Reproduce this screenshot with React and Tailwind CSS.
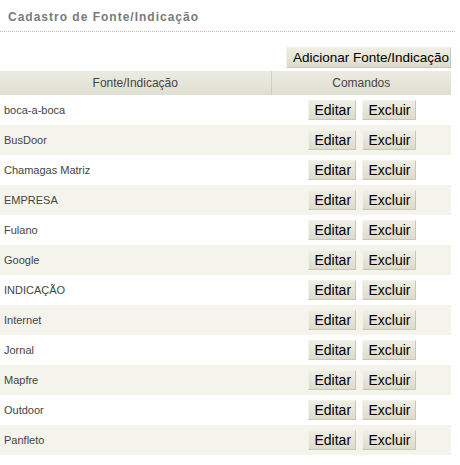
import React from 'react';

const fontes = [
  'boca-a-boca',
  'BusDoor',
  'Chamagas Matriz',
  'EMPRESA',
  'Fulano',
  'Google',
  'INDICAÇÃO',
  'Internet',
  'Jornal',
  'Mapfre',
  'Outdoor',
  'Panfleto',
];

function Botao({ children, className = '' }) {
  return (
    <button
      className={`h-[20px] px-[6px] leading-none whitespace-nowrap text-black bg-gradient-to-b from-[#eeeee4] to-[#dcdbcb] border border-[#f2f2ea] border-b-[#c9c8b6] border-r-[#c9c8b6] ${className}`}
    >
      {children}
    </button>
  );
}

export default function App() {
  return (
    <div className="w-[460px] h-[465px] bg-white font-['Liberation_Sans',Arial,sans-serif] overflow-hidden">
      <div className="w-[455px]">
        <div className="h-[32px] border-b border-dotted border-[#bdbdbd] pl-[8px] pt-[10px]">
          <h1 className="text-[12px] leading-[14px] font-bold tracking-[1px] text-[#7a7a7a]">
            Cadastro de Fonte/Indicação
          </h1>
        </div>

        <div className="flex justify-end pt-[15px] pr-[4px] pb-[3px]">
          <Botao className="h-[21px] w-[165px] px-0 text-[13.5px]">Adicionar Fonte/Indicação</Botao>
        </div>

        <table className="w-[451px] border-collapse text-[11px] text-[#444]">
          <thead>
            <tr className="h-[24px] bg-gradient-to-b from-[#ecebe2] to-[#dfdfd0]">
              <th className="w-[271px] text-[12px] font-normal text-center border-r border-[#cfcfbf] text-[#444]">
                Fonte/Indicação
              </th>
              <th className="text-[12px] font-normal text-center text-[#444]">Comandos</th>
            </tr>
          </thead>
          <tbody>
            {fontes.map((f, i) => (
              <tr key={f} className={`h-[30px] ${i % 2 === 1 ? 'bg-[#f4f3ec]' : 'bg-white'}`}>
                <td className="pl-[4px]">{f}</td>
                <td>
                  <div className="flex justify-center gap-[6px] pl-[1px]">
                    <Botao className="w-[48px] text-[14px]">Editar</Botao>
                    <Botao className="w-[54px] text-[14px]">Excluir</Botao>
                  </div>
                </td>
              </tr>
            ))}
          </tbody>
        </table>
      </div>
    </div>
  );
}
